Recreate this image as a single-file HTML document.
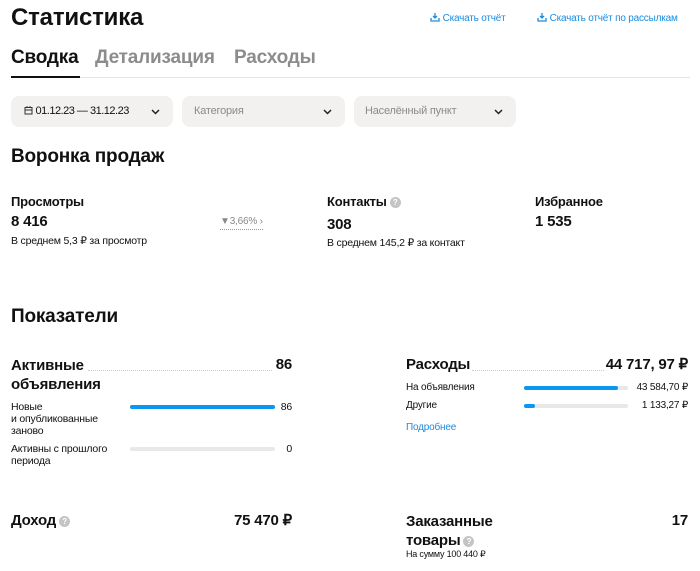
<!DOCTYPE html>
<html><head><meta charset="utf-8"><style>
*{margin:0;padding:0;box-sizing:border-box}
body{width:700px;height:571px;background:#fff;font-family:"Liberation Sans",sans-serif;color:#111;position:relative;overflow:hidden;letter-spacing:-0.2px}
.a{position:absolute;line-height:1;white-space:nowrap}
.b{font-weight:bold}
.blue{color:#1a8cdf}
.box{position:absolute;top:96px;height:31px;background:#f2f1f0;border-radius:8px}
.chev{position:absolute;right:12px;top:10px}
.bar{position:absolute;height:4px;border-radius:2px;background:#e8e8e8}
.bar i{position:absolute;left:0;top:0;height:4px;border-radius:2px;background:#0a97f2}
.dots{position:absolute;border-bottom:1px dotted #ccc}
.q{display:inline-block;width:11px;height:11px;border-radius:50%;background:#c4c4c4;color:#fff;font-size:8px;text-align:center;line-height:11px;vertical-align:1px;margin-left:3px;font-weight:bold}
</style></head><body>
<div class="a b" style="left:11px;top:6px;font-size:24px">Статистика</div>
<div class="a blue" style="left:430px;top:12px;font-size:10px"><svg width="10" height="10" viewBox="0 0 10 10" style="vertical-align:-1px"><path d="M5 1v5M3 4l2 2 2-2M1 6v3h8V6" stroke="#1a8cdf" stroke-width="1.3" fill="none"/></svg> Скачать отчёт</div>
<div class="a blue" style="left:537px;top:12px;font-size:10px"><svg width="10" height="10" viewBox="0 0 10 10" style="vertical-align:-1px"><path d="M5 1v5M3 4l2 2 2-2M1 6v3h8V6" stroke="#1a8cdf" stroke-width="1.3" fill="none"/></svg> Скачать отчёт по рассылкам</div>
<div class="a b" style="left:11px;top:48px;font-size:19px">Сводка</div>
<div class="a b" style="left:95px;top:48px;font-size:19px;color:#8c8c8c">Детализация</div>
<div class="a b" style="left:234px;top:48px;font-size:19px;color:#8c8c8c">Расходы</div>
<div style="position:absolute;left:11px;top:77px;width:679px;height:1px;background:#e4e4e4"></div>
<div style="position:absolute;left:11px;top:76px;width:69px;height:2px;background:#111"></div>
<div class="box" style="left:11px;width:162px"><div class="a" style="left:13px;top:10px;font-size:11px;letter-spacing:-0.5px"><svg width="9" height="9" viewBox="0 0 9 9" style="vertical-align:-1px"><rect x="1" y="1.5" width="7" height="6.5" stroke="#333" fill="none"/><path d="M1 4h7M3 0v2M6 0v2" stroke="#333"/></svg> 01.12.23 — 31.12.23</div><svg class="chev" width="11" height="11" viewBox="0 0 11 11"><path d="M2 4l3.5 3.5L9 4" stroke="#222" stroke-width="1.5" fill="none"/></svg></div>
<div class="box" style="left:182px;width:163px"><div class="a" style="left:12px;top:10px;font-size:11px;color:#8a8a8a">Категория</div><svg class="chev" width="11" height="11" viewBox="0 0 11 11"><path d="M2 4l3.5 3.5L9 4" stroke="#222" stroke-width="1.5" fill="none"/></svg></div>
<div class="box" style="left:354px;width:162px"><div class="a" style="left:11px;top:10px;font-size:11px;color:#8a8a8a">Населённый пункт</div><svg class="chev" width="11" height="11" viewBox="0 0 11 11"><path d="M2 4l3.5 3.5L9 4" stroke="#222" stroke-width="1.5" fill="none"/></svg></div>
<div class="a b" style="left:11px;top:147px;font-size:19px">Воронка продаж</div>
<div class="a b" style="left:11px;top:195px;font-size:13px">Просмотры</div>
<div class="a b" style="left:11px;top:214px;font-size:15px">8 416</div>
<div class="a" style="left:11px;top:236px;font-size:10.5px">В среднем 5,3 ₽ за просмотр</div>
<div class="a" style="left:220px;top:217px;font-size:10px;color:#888;border-bottom:1px dotted #999;padding-bottom:2px">▼3,66% ›</div>
<div class="a b" style="left:327px;top:195px;font-size:13px">Контакты<span class="q">?</span></div>
<div class="a b" style="left:327px;top:217px;font-size:15px">308</div>
<div class="a" style="left:327px;top:238px;font-size:10.5px">В среднем 145,2 ₽ за контакт</div>
<div class="a b" style="left:535px;top:195px;font-size:13px">Избранное</div>
<div class="a b" style="left:535px;top:214px;font-size:15px">1 535</div>
<div class="a b" style="left:11px;top:307px;font-size:19px">Показатели</div>
<div class="a b" style="left:11px;top:356px;font-size:15px;line-height:19px">Активные<br>объявления</div>
<div class="dots" style="left:88px;width:184px;top:370px"></div>
<div class="a b" style="right:408px;top:357px;font-size:15px">86</div>
<div class="a" style="left:11px;top:401px;font-size:10.5px;line-height:12px">Новые<br>и опубликованные<br>заново</div>
<div class="bar" style="left:130px;top:405px;width:145px"><i style="width:145px"></i></div>
<div class="a" style="right:408px;top:402px;font-size:10.5px">86</div>
<div class="a" style="left:11px;top:443px;font-size:10.5px;line-height:12px">Активны с прошлого<br>периода</div>
<div class="bar" style="left:130px;top:447px;width:145px"></div>
<div class="a" style="right:408px;top:444px;font-size:10.5px">0</div>
<div class="a b" style="left:406px;top:357px;font-size:15px">Расходы</div>
<div class="dots" style="left:472px;width:132px;top:370px"></div>
<div class="a b" style="right:12px;top:357px;font-size:15px">44 717, 97 ₽</div>
<div class="a" style="left:406px;top:383px;font-size:10px">На объявления</div>
<div class="bar" style="left:524px;top:386px;width:104px"><i style="width:94px"></i></div>
<div class="a" style="right:12px;top:383px;font-size:10px">43 584,70 ₽</div>
<div class="a" style="left:406px;top:401px;font-size:10px">Другие</div>
<div class="bar" style="left:524px;top:404px;width:104px"><i style="width:11px"></i></div>
<div class="a" style="right:12px;top:401px;font-size:10px">1 133,27 ₽</div>
<div class="a blue" style="left:406px;top:423px;font-size:10px">Подробнее</div>
<div class="a b" style="left:11px;top:513px;font-size:15px">Доход<span class="q">?</span></div>
<div class="a b" style="right:408px;top:513px;font-size:15px">75 470 ₽</div>
<div class="a b" style="left:406px;top:512px;font-size:15px;line-height:19px">Заказанные<br>товары<span class="q">?</span></div>
<div class="a" style="left:406px;top:550px;font-size:9px">На сумму 100 440 ₽</div>
<div class="a b" style="right:12px;top:513px;font-size:15px">17</div>
</body></html>
